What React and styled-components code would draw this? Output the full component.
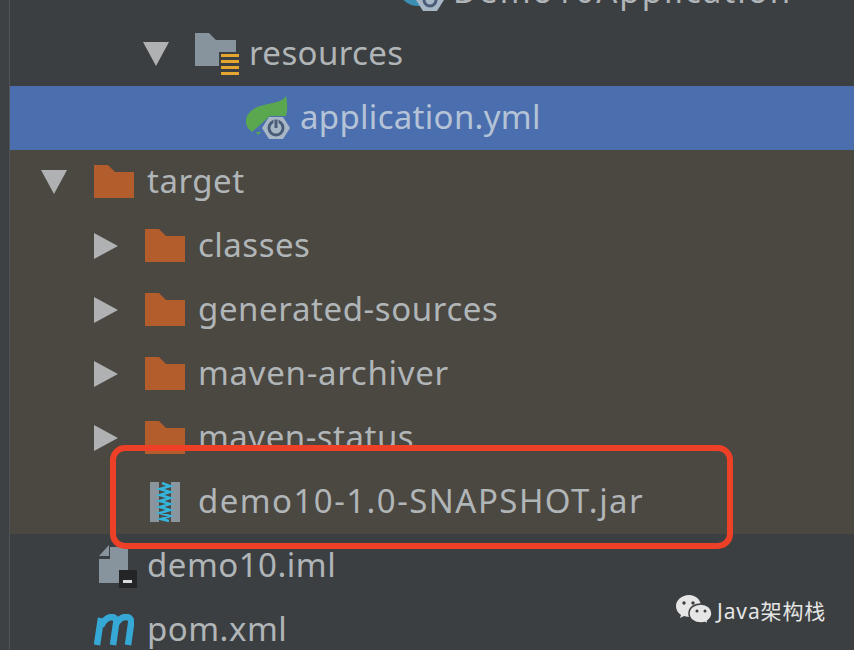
import React from "react";
import styled, { createGlobalStyle } from "styled-components";

const Global = createGlobalStyle`
  html, body { margin: 0; padding: 0; background: #3c3f41; }
  body { width: 854px; height: 650px; overflow: hidden; }
`;
const Page = styled.div`
  position: relative; width: 854px; height: 650px; overflow: hidden;
  display: flex; background: #3c3f41;
  font-family: "Noto Sans", "Noto Sans CJK SC", sans-serif;
`;
const Gutter = styled.div`
  width: 10px; flex: none; box-sizing: border-box;
  background: #3e4144; border-right: 1px solid #515456;
`;
const Tree = styled.div`
  flex: 1; display: flex; flex-direction: column; margin-top: -42px; min-width: 0;
`;
const Row = styled.div`
  height: 64px; flex: none; display: flex; align-items: center; box-sizing: border-box;
  padding-left: ${p => p.$indent}px;
  background: ${p => p.$bg || "transparent"};
  color: ${p => p.$selected ? "#b4c3d6" : "#b0b5b8"};
`;
const ArrowSlot = styled.span`
  width: ${p => p.$w}px; height: 64px; flex: none; display: flex; align-items: center;
`;
const IconSlot = styled.span`
  width: ${p => p.$w}px; height: 64px; flex: none; display: flex; align-items: center;
`;
const Label = styled.span`
  font-size: 33px; line-height: ${p => p.$line || 62}px; height: 64px; white-space: nowrap;
  letter-spacing: ${p => p.$spacing}px;
`;
const Highlight = styled.div`
  position: absolute; left: 110px; top: 445px; width: 623px; height: 104px;
  box-sizing: border-box; border: 6px solid #ee4027; border-radius: 15px;
`;
const Mark = styled.div`
  position: absolute; left: 676px; top: 595px; display: flex; align-items: center; gap: 5px;
  color: #e6e6e6; font-size: 21px; font-family: "Noto Sans", "Noto Sans CJK SC", sans-serif; letter-spacing: .9px;
`;

const Down = () => <svg width="26" height="24" viewBox="0 0 26 24"><path d="M0 0H26L13 24Z" fill="#afb1b3"/></svg>;
const Right = () => <svg width="24" height="26" viewBox="0 0 24 26"><path d="M0 0L24 13L0 26Z" fill="#afb1b3"/></svg>;
const Folder = () => <svg width="40" height="34" viewBox="0 0 40 34"><path d="M0 0H14L21 7H40V33H0Z" fill="#b25d2b"/></svg>;
const ResFolder = () => <svg width="46" height="42" viewBox="0 0 46 42">
  <path d="M0 0H14L21 7H41V32H25V33H0Z" fill="#87939d"/>
  <path d="M24 19H46V42H24Z" fill="#3c3f41"/>
  <path d="M26 21H44V24H26ZM26 27H44V30H26ZM26 33H44V36H26ZM26 39H44V42H26Z" fill="#e5a62f"/>
</svg>;
const Spring = () => <svg width="44" height="45" viewBox="0 0 44 45">
  <path d="M40 0C37 6 26 7 18 9C8 11 0 17 0 25C0 30 2 33 6 36L24 20L40 20C42 12 41 5 40 0Z" fill="#59a84f"/>
  <path d="M10 36L15 36L12 39Z" fill="#59a84f"/>
  <path d="M23 21H37L44 32L37 43H23L16 32Z" fill="#a7b7c6"/>
  <circle cx="30" cy="32" r="7" fill="none" stroke="#4a5d78" strokeWidth="3"/>
  <path d="M30 24V32" stroke="#a7b7c6" strokeWidth="5"/>
  <path d="M30 24V32" stroke="#4a5d78" strokeWidth="3"/>
</svg>;
const Jar = () => <svg width="30" height="40" viewBox="0 0 30 40">
  <path d="M0 0H30V40H0Z" fill="#8a959e"/>
  <path d="M9 0H21V40H9Z" fill="#4b4741"/>
  <path d="M12 1L20 4L10 7L20 10L10 13L20 16L10 19L20 22L10 25L20 28L10 31L20 34L11 37L19 39" fill="none" stroke="#35b5dc" strokeWidth="2.500"/>
</svg>;
const Iml = () => <svg width="39" height="43" viewBox="0 0 39 43">
  <path d="M11 2H29V26H20V38H0V14H11Z" fill="#87939d"/>
  <path d="M10 0V11H0Z" fill="#87939d"/>
  <path d="M20 25H38V43H20Z" fill="#242526"/>
  <path d="M24 35H33V38H24Z" fill="#d9d9d9"/>
</svg>;
const Maven = () => <svg width="40" height="32" viewBox="0 0 40 32">
  <path d="M3 31L7 4M7 12C10 6 14 3 18 3C21 3 23 6 22 10L19 31M22 10C25 5 28 3 32 3C36 3 38 6 37 10L34 31" fill="none" stroke="#35a8d6" strokeWidth="6.500"/>
</svg>;
const Boot = () => <svg width="44" height="44" viewBox="0 0 44 44">
  <circle cx="18" cy="18" r="20" fill="#3b8fb3"/>
  <path d="M23 21H37L44 32L37 43H23L16 32Z" fill="#a7b7c6"/>
  <circle cx="30" cy="32" r="6" fill="none" stroke="#4a5d78" strokeWidth="3"/>
</svg>;

const rows = [
  { indent: 400, icon: <Boot />, w: 53, label: "Demo10Application", spacing: 2, line: 66 },
  { indent: 143, arrow: <Down />, aw: 52, icon: <ResFolder />, w: 54, label: "resources", spacing: .4 },
  { indent: 246, icon: <Spring />, w: 54, label: "application.yml", selected: true, bg: "#4b6eaf", spacing: .3 },
  { indent: 41, arrow: <Down />, aw: 53, icon: <Folder />, w: 53, label: "target", bg: "#4b4741", spacing: .5 },
  { indent: 94, arrow: <Right />, aw: 51, icon: <Folder />, w: 53, label: "classes", bg: "#4b4741", spacing: .5 },
  { indent: 94, arrow: <Right />, aw: 51, icon: <Folder />, w: 53, label: "generated-sources", bg: "#4b4741", spacing: .6 },
  { indent: 94, arrow: <Right />, aw: 51, icon: <Folder />, w: 53, label: "maven-archiver", bg: "#4b4741", spacing: .7 },
  { indent: 94, arrow: <Right />, aw: 51, icon: <Folder />, w: 53, label: "maven-status", bg: "#4b4741", spacing: .5 },
  { indent: 150, icon: <Jar />, w: 48, label: "demo10-1.0-SNAPSHOT.jar", bg: "#4b4741", spacing: 1.45 },
  { indent: 99, icon: <Iml />, w: 48, label: "demo10.iml", spacing: .5 },
  { indent: 94, icon: <Maven />, w: 53, label: "pom.xml", spacing: .5 },
];

const Wechat = () => <svg width="36" height="30" viewBox="0 0 36 30">
  <path d="M13 0C6 0 0 5 0 11C0 15 2 18 5 20L4 23L8 21C9 21 11 22 13 22C20 22 25 17 25 11C25 5 20 0 13 0Z" fill="#e6e6e6"/>
  <circle cx="8" cy="8" r="1.7" fill="#3c3f41"/><circle cx="17" cy="8" r="1.7" fill="#3c3f41"/>
  <path d="M25 9C18 9 13 13 13 18.500C13 24 18 28 25 28C26 28 28 28 29 27.500L32 29L31.500 26C34 24 36 21.500 36 18.500C36 13 31 9 25 9Z" fill="#e6e6e6" stroke="#3c3f41" strokeWidth="1.500"/>
  <circle cx="21" cy="16" r="1.500" fill="#3c3f41"/><circle cx="29" cy="16" r="1.500" fill="#3c3f41"/>
</svg>;

export default function App() {
  return (
    <Page>
      <Global />
      <Gutter />
      <Tree>
        {rows.map(r => (
          <Row key={r.label} $indent={r.indent - 10} $bg={r.bg} $selected={r.selected}>
            {r.arrow && <ArrowSlot $w={r.aw}>{r.arrow}</ArrowSlot>}
            <IconSlot $w={r.w}>{r.icon}</IconSlot>
            <Label $spacing={r.spacing} $line={r.line}>{r.label}</Label>
          </Row>
        ))}
      </Tree>
      <Highlight />
      <Mark><Wechat /><span>Java架构栈</span></Mark>
    </Page>
  );
}
